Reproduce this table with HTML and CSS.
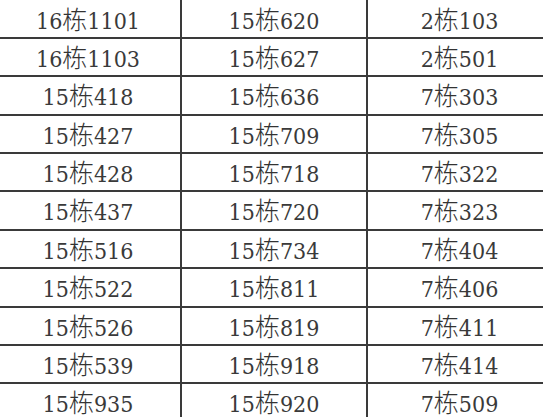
FILE: index.html
```html
<!DOCTYPE html>
<html>
<head>
<meta charset="utf-8">
<link rel="stylesheet" href="styles.css">
</head>
<body>
<table class="grid">
<colgroup><col class="c1"><col class="c2"><col class="c3"></colgroup>
<tbody>
<tr class="first"><td><span class="n">16</span>栋<span class="n">1101</span></td><td><span class="n">15</span>栋<span class="n">620</span></td><td><span class="n">2</span>栋<span class="n">103</span></td></tr>
<tr><td><span class="n">16</span>栋<span class="n">1103</span></td><td><span class="n">15</span>栋<span class="n">627</span></td><td><span class="n">2</span>栋<span class="n">501</span></td></tr>
<tr><td><span class="n">15</span>栋<span class="n">418</span></td><td><span class="n">15</span>栋<span class="n">636</span></td><td><span class="n">7</span>栋<span class="n">303</span></td></tr>
<tr><td><span class="n">15</span>栋<span class="n">427</span></td><td><span class="n">15</span>栋<span class="n">709</span></td><td><span class="n">7</span>栋<span class="n">305</span></td></tr>
<tr><td><span class="n">15</span>栋<span class="n">428</span></td><td><span class="n">15</span>栋<span class="n">718</span></td><td><span class="n">7</span>栋<span class="n">322</span></td></tr>
<tr><td><span class="n">15</span>栋<span class="n">437</span></td><td><span class="n">15</span>栋<span class="n">720</span></td><td><span class="n">7</span>栋<span class="n">323</span></td></tr>
<tr><td><span class="n">15</span>栋<span class="n">516</span></td><td><span class="n">15</span>栋<span class="n">734</span></td><td><span class="n">7</span>栋<span class="n">404</span></td></tr>
<tr><td><span class="n">15</span>栋<span class="n">522</span></td><td><span class="n">15</span>栋<span class="n">811</span></td><td><span class="n">7</span>栋<span class="n">406</span></td></tr>
<tr><td><span class="n">15</span>栋<span class="n">526</span></td><td><span class="n">15</span>栋<span class="n">819</span></td><td><span class="n">7</span>栋<span class="n">411</span></td></tr>
<tr><td><span class="n">15</span>栋<span class="n">539</span></td><td><span class="n">15</span>栋<span class="n">918</span></td><td><span class="n">7</span>栋<span class="n">414</span></td></tr>
<tr><td><span class="n">15</span>栋<span class="n">935</span></td><td><span class="n">15</span>栋<span class="n">920</span></td><td><span class="n">7</span>栋<span class="n">509</span></td></tr>
</tbody>
</table>
</body>
</html>
```

FILE: styles.css
```css
html, body {
  margin: 0;
  padding: 0;
  background: #ffffff;
  overflow: hidden;
}
.grid {
  border-collapse: collapse;
  table-layout: fixed;
  width: 543px;
  font-family: "Noto Sans CJK SC", sans-serif;
  font-size: 25px;
  font-weight: 300;
  color: #333333;
}
.n {
  font-family: "DejaVu Serif Condensed", "DejaVu Serif", serif;
  font-stretch: condensed;
  font-size: 23px;
  font-weight: 400;
  color: #3a3a3a;
}
.c1 { width: 181px; }
.c2 { width: 186px; }
.c3 { width: 176px; }
.grid td {
  border: 2px solid #3a3a3a;
  height: 38.37px;
  padding: 2px 0 0 0;
  text-align: center;
  vertical-align: top;
  line-height: 30px;
  box-sizing: border-box;
  white-space: nowrap;
}
.grid tr.first td {
  border-top: none;
  height: 38px;
  padding-top: 3px;
}
.grid td:first-child {
  border-left: none;
  padding-right: 4px;
}
.grid td:last-child {
  border-right: none;
  padding-left: 8px;
}
```
